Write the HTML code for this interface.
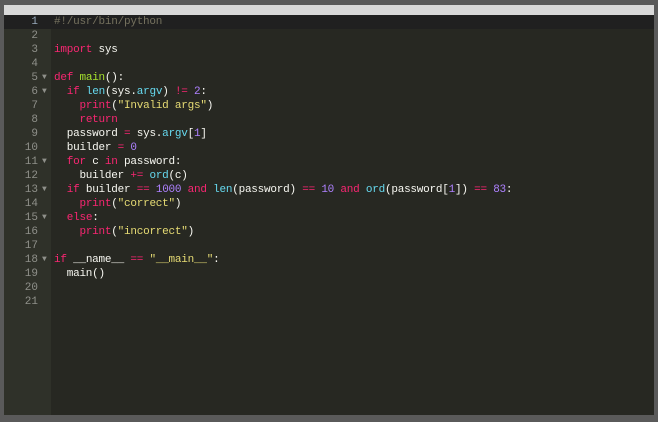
<!DOCTYPE html><html><head><style>
body{margin:0;width:658px;height:422px;background:#5a5a5a;overflow:hidden;font-family:"Liberation Mono",monospace;}
#top{position:absolute;left:4px;top:5px;width:650px;height:10px;background:#d9d9d9;}
#ed{position:absolute;left:4px;top:15px;width:650px;height:400px;background:#272822;}
#gut{position:absolute;left:0;top:0;width:47px;height:400px;background:#2f3129;}
.l{position:absolute;left:0;height:14px;line-height:14px;font-size:11px;white-space:pre;}
.n{width:34px;text-align:right;color:#8f908a;}
.f{position:absolute;left:38px;color:#8f908a;font-size:8px;line-height:14px}
.c{left:50px;color:#f8f8f2;letter-spacing:-0.24px;}
.k{color:#f92672}.fn{color:#a6e22e}.b{color:#66d9ef}.s{color:#e6db74}.m{color:#ae81ff}.cm{color:#75715e}
#act{position:absolute;left:0;top:0;width:650px;height:14px;background:#202020}
</style></head><body>
<div id="top"></div>
<div id="ed"><div id="gut"></div><div id="act"></div>
<div style="position:absolute;left:0;top:0">
<div class="l n" style="top:0;color:#9ab">1</div><div class="l n" style="top:14px">2</div><div class="l n" style="top:28px">3</div><div class="l n" style="top:42px">4</div><div class="l n" style="top:56px">5</div><div class="l n" style="top:70px">6</div><div class="l n" style="top:84px">7</div><div class="l n" style="top:98px">8</div><div class="l n" style="top:112px">9</div><div class="l n" style="top:126px">10</div><div class="l n" style="top:140px">11</div><div class="l n" style="top:154px">12</div><div class="l n" style="top:168px">13</div><div class="l n" style="top:182px">14</div><div class="l n" style="top:196px">15</div><div class="l n" style="top:210px">16</div><div class="l n" style="top:224px">17</div><div class="l n" style="top:238px">18</div><div class="l n" style="top:252px">19</div><div class="l n" style="top:266px">20</div><div class="l n" style="top:280px">21</div>
<div class="f" style="top:56px">▼</div><div class="f" style="top:70px">▼</div><div class="f" style="top:140px">▼</div><div class="f" style="top:168px">▼</div><div class="f" style="top:196px">▼</div><div class="f" style="top:238px">▼</div>
<div class="l c" style="top:0"><span class="cm">#!/usr/bin/python</span></div>
<div class="l c" style="top:28px"><span class="k">import</span> sys</div>
<div class="l c" style="top:56px"><span class="k">def</span> <span class="fn">main</span>():</div>
<div class="l c" style="top:70px">  <span class="k">if</span> <span class="b">len</span>(sys.<span class="b">argv</span>) <span class="k">!=</span> <span class="m">2</span>:</div>
<div class="l c" style="top:84px">    <span class="k">print</span>(<span class="s">"Invalid args"</span>)</div>
<div class="l c" style="top:98px">    <span class="k">return</span></div>
<div class="l c" style="top:112px">  password <span class="k">=</span> sys.<span class="b">argv</span>[<span class="m">1</span>]</div>
<div class="l c" style="top:126px">  builder <span class="k">=</span> <span class="m">0</span></div>
<div class="l c" style="top:140px">  <span class="k">for</span> c <span class="k">in</span> password:</div>
<div class="l c" style="top:154px">    builder <span class="k">+=</span> <span class="b">ord</span>(c)</div>
<div class="l c" style="top:168px">  <span class="k">if</span> builder <span class="k">==</span> <span class="m">1000</span> <span class="k">and</span> <span class="b">len</span>(password) <span class="k">==</span> <span class="m">10</span> <span class="k">and</span> <span class="b">ord</span>(password[<span class="m">1</span>]) <span class="k">==</span> <span class="m">83</span>:</div>
<div class="l c" style="top:182px">    <span class="k">print</span>(<span class="s">"correct"</span>)</div>
<div class="l c" style="top:196px">  <span class="k">else</span>:</div>
<div class="l c" style="top:210px">    <span class="k">print</span>(<span class="s">"incorrect"</span>)</div>
<div class="l c" style="top:238px"><span class="k">if</span> __name__ <span class="k">==</span> <span class="s">"__main__"</span>:</div>
<div class="l c" style="top:252px">  main()</div>
</div>
</div>
</body></html>
